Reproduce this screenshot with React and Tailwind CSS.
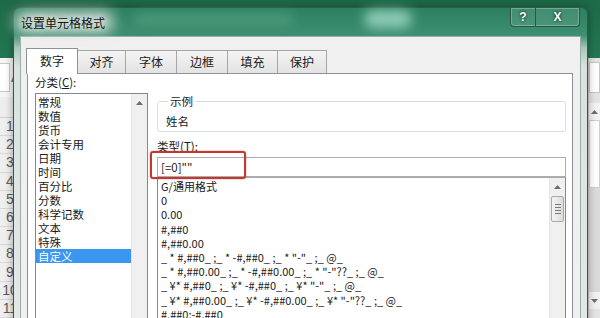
import React from 'react';

const categories = ['常规', '数值', '货币', '会计专用', '日期', '时间', '百分比', '分数', '科学记数', '文本', '特殊', '自定义'];

const formats = [
  'G/通用格式',
  '0',
  '0.00',
  '#,##0',
  '#,##0.00',
  '_ * #,##0_ ;_ * -#,##0_ ;_ * "-"_ ;_ @_',
  '_ * #,##0.00_ ;_ * -#,##0.00_ ;_ * "-"??_ ;_ @_',
  '_ ¥* #,##0_ ;_ ¥* -#,##0_ ;_ ¥* "-"_ ;_ @_',
  '_ ¥* #,##0.00_ ;_ ¥* -#,##0.00_ ;_ ¥* "-"??_ ;_ @_',
  '#,##0;-#,##0',
  '#,##0;[红色]-#,##0',
];

const tabs = [
  { label: '对齐', w: 'w-[48px]' },
  { label: '字体', w: 'w-[51px]' },
  { label: '边框', w: 'w-[51px]' },
  { label: '填充', w: 'w-[50px]' },
  { label: '保护', w: 'w-[49px]' },
];

const rows = [1, 2, 3, 4, 5, 6, 7, 8, 9, 10, 11];

const Arrow = ({ down, color = '#6d6d6d' }) => (
  <svg width="7" height="4" viewBox="0 0 7 4">
    {down ? <polygon points="0,0 7,0 3.5,4" fill={color} /> : <polygon points="0,4 7,4 3.5,0" fill={color} />}
  </svg>
);

const ListScrollbar = ({ thumb }) => (
  <div className="w-[16px] flex flex-col items-center bg-[#f0f0f0] border-l border-[#e6e6e6]">
    <div className="h-[17px] w-full flex items-center justify-center">
      <Arrow />
    </div>
    {thumb && (
      <div className="w-[13px] h-[26px] mt-px rounded-[2px] border border-[#a9a9a9] bg-gradient-to-r from-[#f4f4f4] to-[#dcdcdc] flex flex-col items-center justify-center gap-[2px]">
        <div className="w-[6px] h-px bg-[#7b7b7b]" />
        <div className="w-[6px] h-px bg-[#7b7b7b]" />
        <div className="w-[6px] h-px bg-[#7b7b7b]" />
        <div className="w-[6px] h-px bg-[#7b7b7b]" />
      </div>
    )}
  </div>
);

export default function App() {
  return (
    <div className="relative w-[600px] h-[318px] overflow-hidden bg-[#f3f3f3] font-['Noto_Sans_CJK_SC',sans-serif] text-[11.5px] text-[#1a1a1a]">
      {/* excel window behind */}
      <div className="flex flex-col h-full">
        <div className="h-[58px] bg-gradient-to-b from-[#1c6a47] to-[#247752]" />
        <div className="flex flex-1 min-h-0">
          <div className="flex-1 flex flex-col">
            <div className="h-[42px] flex items-center bg-[#f6f6f6]">
              <div className="w-[10px] h-[29px] bg-white border border-l-0 border-[#c8c8c8]" />
              <span className="ml-px text-[13px] text-[#555] font-['Liberation_Sans',sans-serif]">A</span>
            </div>
            <div className="h-[22px] bg-[#eeeeee] border-b border-[#d0d0d0]" />
            {rows.map((r) => (
              <div key={r} className="h-[18.2px] w-[20px] flex items-center justify-center bg-[#efefef] border-b border-[#d8d8d8] text-[14px] text-[#5a5a5a] font-['Liberation_Sans',sans-serif]">
                {r}
              </div>
            ))}
          </div>
          <div className="w-[12px] flex flex-col bg-[#e4e4e4] border-l border-[#cfcfcf]">
            <div className="mt-[4px] h-[31px] bg-white border border-[#c6c6c6]" />
            <div className="mt-[10px] h-[17px] bg-[#f2f2f2] flex items-center justify-center">
              <Arrow />
            </div>
            <div className="h-[68px] bg-white border border-[#d0d0d0]" />
            <div className="flex-1 bg-[#dadada]" />
            <div className="h-[17px] bg-[#f2f2f2] flex items-center justify-center">
              <Arrow down />
            </div>
            <div className="h-[9px]" />
          </div>
        </div>
      </div>

      {/* dialog window */}
      <div className="absolute left-[13px] top-[7px] w-[575px] h-[330px] flex flex-col rounded-t-[7px] border border-[#34584a] shadow-[0_0_8px_rgba(0,0,0,0.35)] bg-[linear-gradient(to_bottom,#2c8061_0px,#3c8f6f_27px,#a9c6b9_40px,#d9e2de_58px,#e3e8e6_100%)]">
        {/* title bar */}
        <div className="relative h-[28px] flex items-start shrink-0">
          <div className="absolute left-[350px] top-[2px] w-[48px] h-[18px] rounded-full bg-[#a6ddcc] blur-[6px] opacity-80" />
          <div className="absolute left-[120px] top-[6px] w-[160px] h-[10px] rounded-full bg-[#5ea68a] blur-[6px] opacity-70" />
          <div className="absolute left-0 top-[3px] w-[100px] h-[22px] rounded-full bg-[#d4ddd8] blur-[7px] opacity-90" />
          <span className="relative ml-[7px] mt-[8px] leading-[14px] text-[12px] text-[#111] [text-shadow:0_0_6px_#ffffff]">设置单元格格式</span>
          <div className="relative ml-auto mr-[7px] flex h-[19px] rounded-b-[4px] border border-t-0 border-[#2d5446] bg-white/10 shadow-[inset_0_0_0_1px_rgba(255,255,255,0.25)] overflow-hidden">
            <div className="w-[25px] flex items-center justify-center border-r border-[#2d5446] text-white font-bold text-[12px] font-['Liberation_Sans',sans-serif] [text-shadow:0_0_3px_#000]">?</div>
            <div className="w-[43px] flex items-center justify-center text-white font-bold text-[12px] font-['Liberation_Sans',sans-serif] [text-shadow:0_0_3px_#000]">X</div>
          </div>
        </div>

        {/* client area */}
        <div className="flex-1 min-h-0 px-[6px]">
          <div className="h-full flex flex-col bg-[#f0f0f0] border border-[#9aaca5] pt-[11px]">
            <div className="flex items-end ml-[5px] h-[26px]">
              <div className="relative z-10 w-[52px] h-[26px] bg-white border border-b-0 border-[#8e9196] flex items-center justify-center text-[12px] pb-[2px]">
                数字
              </div>
              {tabs.map((t) => (
                <div key={t.label} className={`${t.w} h-[24px] bg-gradient-to-b from-[#f4f4f4] to-[#e2e2e2] border-t border-r border-[#a6a6a6] flex items-center justify-center text-[12px] pb-[2px]`}>
                  {t.label}
                </div>
              ))}
            </div>
            <div className="-mt-px ml-[6px] w-[546px] flex-1 flex bg-white border border-[#8e9196]">
              {/* category */}
              <div className="pl-[7px] pt-px flex flex-col">
                <div className="h-[14px] leading-[14px]">
                  分类(<span className="underline">C</span>):
                </div>
                <div className="mt-[4px] w-[113px] flex-1 flex border border-[#828790] bg-white">
                  <div className="flex-1 pt-px">
                    {categories.map((c, i) => (
                      <div key={c} className={`h-[14px] leading-[14px] pl-[2px] ${i === categories.length - 1 ? 'bg-[#3a96ee] text-white' : ''}`}>
                        {c}
                      </div>
                    ))}
                  </div>
                  <ListScrollbar />
                </div>
              </div>

              {/* right side */}
              <div className="ml-[9px] mt-[20px] w-[409px] flex flex-col">
                <fieldset className="border border-[#d5dfe5] rounded-[3px] pl-[8px] pb-[3px]">
                  <legend className="ml-[2px] px-[2px] leading-[14px]">示例</legend>
                  <div className="mt-[6px] h-[14px] leading-[14px]">姓名</div>
                </fieldset>
                <div className="mt-[7px] h-[14px] leading-[14px]">
                  类型(<span className="underline">T</span>):
                </div>
                <div className="relative z-10 mt-[4px] h-[20px] border border-[#abadb3] bg-white pl-[3px] leading-[18px]">
                  [=0]""
                  <div className="absolute -left-[8px] -top-[7px] w-[96px] h-[28px] rounded-[3px] border-[2px] border-[#c4392f] shadow-[0_0_2px_rgba(160,30,30,0.5)]" />
                </div>
                <div className="flex-1 flex border border-[#828790] border-t-[#a9a9a9] bg-white">
                  <div className="flex-1 pt-px pl-[3px] whitespace-pre overflow-hidden text-[11px]">
                    {formats.map((f) => (
                      <div key={f} className="h-[14.2px] leading-[14.2px]">{f}</div>
                    ))}
                  </div>
                  <ListScrollbar thumb />
                </div>
              </div>
            </div>
          </div>
        </div>
      </div>
    </div>
  );
}
